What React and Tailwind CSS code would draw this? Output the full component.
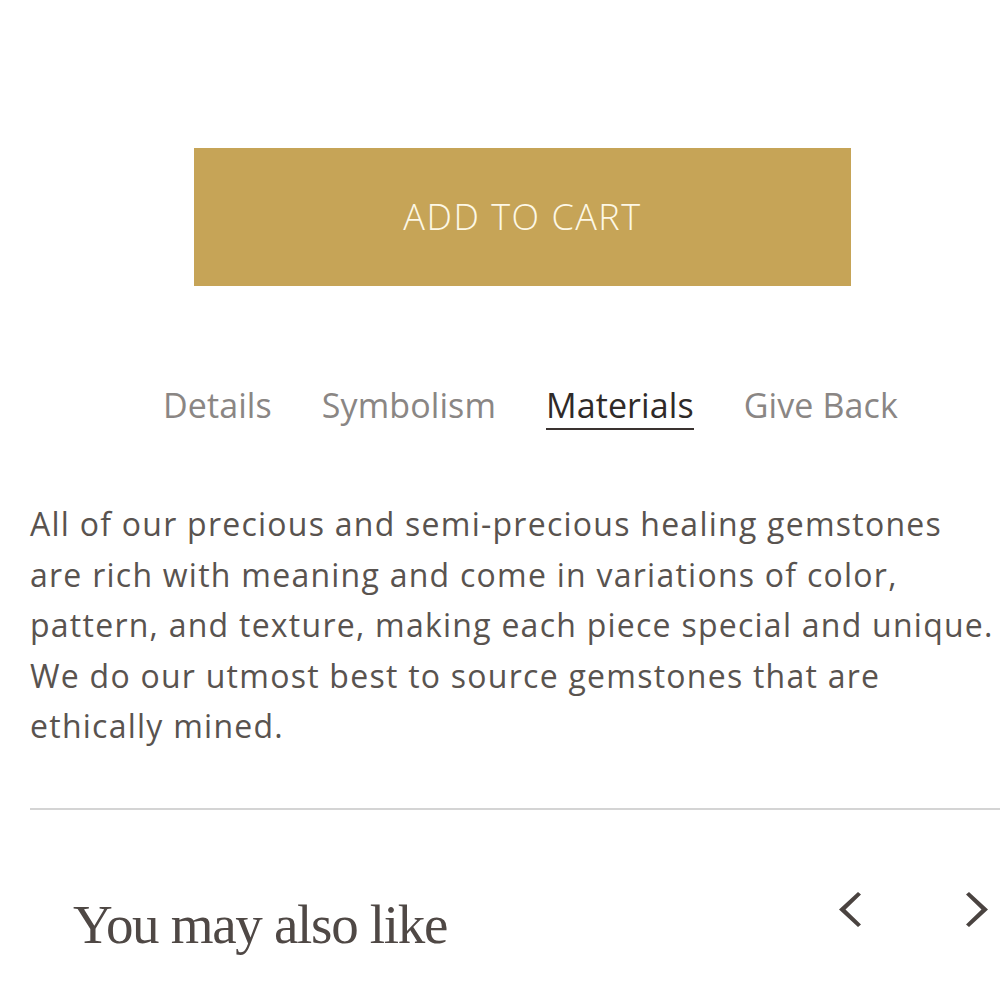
import React, { useState } from 'react';

const tabs = ['Details', 'Symbolism', 'Materials', 'Give Back'];

export default function App() {
    const [active, setActive] = useState('Materials');

    return (
        <div className="w-[1000px] h-[1000px] bg-white overflow-hidden font-['Open_Sans',sans-serif]">
            {/* ADD TO CART */}
            <div className="pt-[148px] pl-[194px]">
                <button className="w-[657px] h-[138px] bg-[#c6a457] text-[#fdf8e6] text-[36px] font-light tracking-[1.5px] flex items-center justify-center">
                    ADD TO CART
                </button>
            </div>

            {/* TABS */}
            <div className="mt-[96px] pl-[163px] flex gap-[50px]">
                {tabs.map(t => (
                    <button
                        key={t}
                        onClick={() => setActive(t)}
                        className={`text-[34px] leading-[46px] tracking-[0.1px] border-b-2 ${active === t ? 'text-[#2f2a28] border-[#3a3230]' : 'text-[#8a8684] border-transparent'}`}
                    >
                        {t}
                    </button>
                ))}
            </div>

            {/* TEXT */}
            <p className="mt-[69px] pl-[30px] text-[32px] leading-[50.5px] tracking-[1.25px] text-[#59534f]">
                All of our precious and semi-precious healing gemstones are rich with meaning and come in variations of color, pattern, and texture, making each piece special and unique. We do our utmost best to source gemstones that are ethically mined.
            </p>

            <div className="mt-[56px] ml-[30px] h-[2px] bg-[#d4d4d4]" />

            {/* YOU MAY ALSO LIKE */}
            <div className="mt-[85px] pl-[73px] pr-[12px] flex items-start justify-between">
                <h2 className="font-['Liberation_Serif',serif] text-[55px] leading-[60px] text-[#4f4845] tracking-[-1.3px]">
                    You may also like
                </h2>
                <div className="flex gap-[105px] -mt-[3px]">
                    <svg width="22" height="35" viewBox="0 0 22 35" fill="#4a4340">
                        <path d="M19 0 L22 2.5 L6.5 17.5 L22 32.5 L19 35 L0 17.5 Z" />
                    </svg>
                    <svg width="22" height="35" viewBox="0 0 22 35" fill="#4a4340">
                        <path d="M3 0 L0 2.5 L15.5 17.5 L0 32.5 L3 35 L22 17.5 Z" />
                    </svg>
                </div>
            </div>
        </div>
    );
}
